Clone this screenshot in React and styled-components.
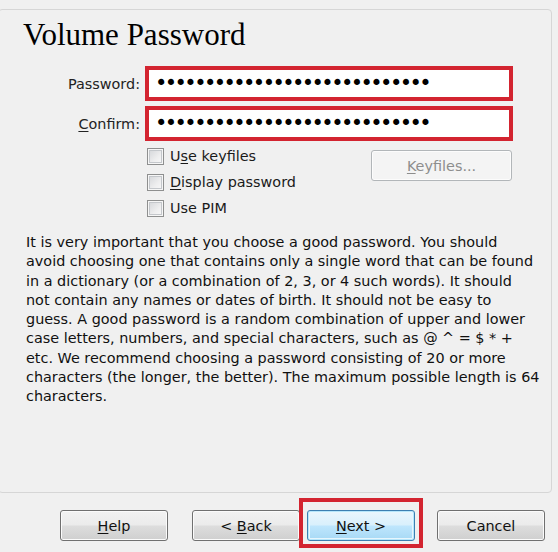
import React from "react";
import styled, { createGlobalStyle, css } from "styled-components";

const GlobalStyle = createGlobalStyle`
  html, body {
    margin: 0;
    padding: 0;
    background: #f0f0f0;
  }
  body {
    font-family: Tahoma, "DejaVu Sans", sans-serif;
    font-size: 14.4px;
    color: #000;
  }
`;

const DOTS = "•".repeat(28);

const TEXT_LINES = [
  "It is very important that you choose a good password. You should",
  "avoid choosing one that contains only a single word that can be found",
  "in a dictionary (or a combination of 2, 3, or 4 such words). It should",
  "not contain any names or dates of birth. It should not be easy to",
  "guess. A good password is a random combination of upper and lower",
  "case letters, numbers, and special characters, such as @ ^ = $ * +",
  "etc. We recommend choosing a password consisting of 20 or more",
  "characters (the longer, the better). The maximum possible length is 64",
  "characters.",
];

const Key = ({ children }) => <Acc>{children}</Acc>;

export default function App() {
  return (
    <>
      <GlobalStyle />
      <Window>
        <Panel>
          <Title>Volume Password</Title>

          <FieldRow $first>
            <Label>Password:</Label>
            <Field>
              <Dots>{DOTS}</Dots>
            </Field>
          </FieldRow>
          <FieldRow>
            <Label>
              <Key>C</Key>onfirm:
            </Label>
            <Field>
              <Dots>{DOTS}</Dots>
            </Field>
          </FieldRow>

          <Options>
            <CheckList>
              <CheckRow>
                <Box />
                <span>
                  U<Key>s</Key>e keyfiles
                </span>
              </CheckRow>
              <CheckRow>
                <Box />
                <span>
                  <Key>D</Key>isplay password
                </span>
              </CheckRow>
              <CheckRow>
                <Box />
                <span>Use PIM</span>
              </CheckRow>
            </CheckList>
            <Button $variant="disabled" $w={141}>
              <Key>K</Key>eyfiles...
            </Button>
          </Options>

          <Info>
            {TEXT_LINES.map((line) => (
              <Line key={line}>{line}</Line>
            ))}
          </Info>
        </Panel>

        <Footer>
          <Button>
            <Key>H</Key>elp
          </Button>
          <Button $gap={24}>
            &lt; <Key>B</Key>ack
          </Button>
          <Highlight>
            <Button $variant="focused">
              <Key>N</Key>ext &gt;
            </Button>
          </Highlight>
          <Button>Cancel</Button>
        </Footer>
      </Window>
    </>
  );
}

const Window = styled.div`
  width: 558px;
  height: 552px;
  overflow: hidden;
  display: flex;
  flex-direction: column;
  background: #f0f0f0;
`;

const Panel = styled.section`
  box-sizing: border-box;
  height: 484px;
  margin: 9px 6px 0 -2px;
  border: 1px solid #d6d6d6;
  border-radius: 4px;
  display: flex;
  flex-direction: column;
`;

const Title = styled.h1`
  margin: 9px 0 0 24px;
  font: 400 31px/31px "Liberation Serif", "Times New Roman", serif;
  color: #000;
`;

const FieldRow = styled.div`
  display: flex;
  align-items: center;
  gap: 5px;
  margin-top: ${(p) => (p.$first ? 16 : 5)}px;
`;

const Label = styled.label`
  width: 141px;
  text-align: right;
  color: #222;
`;

const Field = styled.div`
  box-sizing: border-box;
  width: 368px;
  height: 35px;
  border: 4px solid #d32430;
  background: #fff;
  display: flex;
  align-items: center;
  padding-left: 6px;
`;

const Dots = styled.span`
  font-family: "DejaVu Sans", sans-serif;
  font-size: 21px;
  letter-spacing: -2.6px;
  line-height: 1;
  color: #000;
`;

const Options = styled.div`
  display: flex;
  justify-content: space-between;
  align-items: flex-start;
  margin-top: 2px;
  padding: 0 39px 0 148px;
`;

const CheckList = styled.div`
  display: flex;
  flex-direction: column;
`;

const CheckRow = styled.div`
  height: 26px;
  display: flex;
  align-items: center;
  gap: 6px;
  color: #1a1a1a;
`;

const Box = styled.span`
  box-sizing: border-box;
  width: 17px;
  height: 17px;
  border: 1px solid #8e8f8f;
  background: linear-gradient(135deg, #d2d4d7 0%, #eeeeef 60%, #fafafa 100%);
  box-shadow: inset 0 0 0 1px #f6f6f6, inset 0 0 0 2px #c4c7cb;
`;

const Info = styled.div`
  margin-top: 12px;
  padding: 0 10px 0 27px;
  line-height: 19.3px;
  color: #111;
`;

const Line = styled.div`
  white-space: pre;
`;

const Footer = styled.div`
  display: flex;
  align-items: flex-start;
  padding: 17px 0 0 60px;
`;

const Highlight = styled.div`
  position: relative;
  margin: 0 22px 0 7px;

  &::after {
    content: "";
    position: absolute;
    inset: -12px -8px -7px -8px;
    border: 4px solid #d32430;
    pointer-events: none;
  }
`;

const variants = {
  normal: css`
    border: 1px solid #707070;
    color: #111;
    background: linear-gradient(#f2f2f2 0%, #ebebeb 48%, #dddddd 52%, #cfcfcf 100%);
    box-shadow: inset 0 0 0 1px #fbfbfb;
  `,
  focused: css`
    border: 1px solid #3c7fb1;
    color: #111;
    background: linear-gradient(#eaf6fd 0%, #d9f0fc 48%, #bee6fd 52%, #a7d9f5 100%);
    box-shadow: inset 0 0 0 1px #b6e6fb, inset 0 0 0 2px #e7f6fd;
  `,
  disabled: css`
    border: 1px solid #b2b6b9;
    color: #8d8d8d;
    background: #f4f4f4;
    box-shadow: inset 0 0 0 1px #fcfcfc;
  `,
};

const Button = styled.button`
  box-sizing: border-box;
  width: ${(p) => p.$w || 108}px;
  height: 31px;
  margin: ${(p) => (p.$variant === "disabled" ? "7px" : "0")} 0 0
    ${(p) => p.$gap || 0}px;
  padding: 0;
  border-radius: 3px;
  font: inherit;
  cursor: default;
  ${(p) => variants[p.$variant || "normal"]}
`;

const Acc = styled.u`
  text-decoration: underline;
  text-underline-offset: 2px;
  text-decoration-thickness: 1px;
`;
